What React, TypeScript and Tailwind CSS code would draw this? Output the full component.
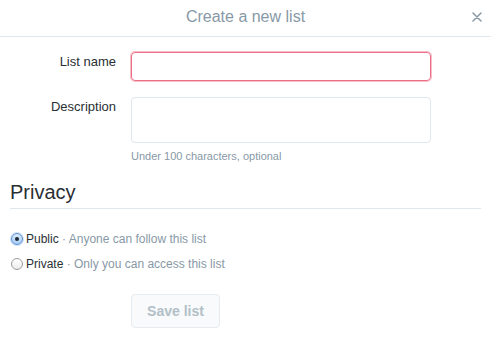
import React from "react";

function Radio({ checked }: { checked: boolean }) {
  if (checked) {
    return (
      <span className="flex h-[12px] w-[12px] shrink-0 items-center justify-center rounded-full border border-[#5b8fd6] bg-gradient-to-b from-[#dbeafc] to-[#a9cdf5] shadow-[0_0_0_1px_rgba(120,170,235,0.35)]">
        <span className="h-[4px] w-[4px] rounded-full bg-[#1c2a3d]" />
      </span>
    );
  }
  return (
    <span className="h-[12px] w-[12px] shrink-0 rounded-full border border-[#9c9c9c] bg-gradient-to-b from-[#ffffff] to-[#ececec]" />
  );
}

export default function App() {
  return (
    <div
      className="h-[339px] w-[491px] overflow-hidden bg-white text-[#292f33]"
      style={{ fontFamily: '"Liberation Sans", Arial, sans-serif' }}
    >
      <div className="grid h-[37px] grid-cols-[1fr_auto_1fr] items-center border-b border-[#e1e8ed]">
        <div />
        <div className="pb-[2px] text-[16px] leading-[20px] text-[#8899a6]">Create a new list</div>
        <div className="flex justify-end pr-[9px] pb-[2px]">
          <svg width="10" height="10" viewBox="0 0 10 10" className="block">
            <path d="M1 1 L9 9 M9 1 L1 9" stroke="#8899a6" strokeWidth="1.5" strokeLinecap="round" />
          </svg>
        </div>
      </div>

      <div className="pt-[15px]">
        <div className="flex gap-[15px]">
          <div className="w-[116px] pt-[1px] text-right text-[13px] leading-[18px]">List name</div>
          <div className="h-[29px] w-[300px] rounded-[4px] border border-[#ec6f86] shadow-[0_0_0_1px_rgba(236,111,134,0.45)]" />
        </div>
        <div className="mt-[16px] flex gap-[15px]">
          <div className="w-[116px] pt-[1px] text-right text-[13px] leading-[18px]">Description</div>
          <div>
            <div className="h-[46px] w-[300px] rounded-[4px] border border-[#e1e8ed]" />
            <div className="mt-[5px] text-[11px] leading-[16px] text-[#8899a6]">
              Under 100 characters, optional
            </div>
          </div>
        </div>

        <div className="mx-[10px] mt-[16px] border-b border-[#e1e8ed] pb-[4px] text-[20px] leading-[24px] text-[#292f33]">
          Privacy
        </div>

        <div className="mt-[17px] pl-[11px]">
          <div className="flex h-[25px] items-center gap-[3px] text-[12px] leading-[16px]">
            <Radio checked />
            <span>
              Public <span className="text-[#8899a6]">· Anyone can follow this list</span>
            </span>
          </div>
          <div className="flex h-[25px] items-center gap-[3px] text-[12px] leading-[16px]">
            <Radio checked={false} />
            <span>
              Private <span className="text-[#8899a6]">· Only you can access this list</span>
            </span>
          </div>
        </div>

        <div className="ml-[131px] mt-[18px] flex h-[34px] w-[89px] items-center justify-center rounded-[4px] border border-[#e6ecf0] bg-[#f8fafb] text-[14px] font-bold text-[#b3bfc8]">
          Save list
        </div>
      </div>
    </div>
  );
}
